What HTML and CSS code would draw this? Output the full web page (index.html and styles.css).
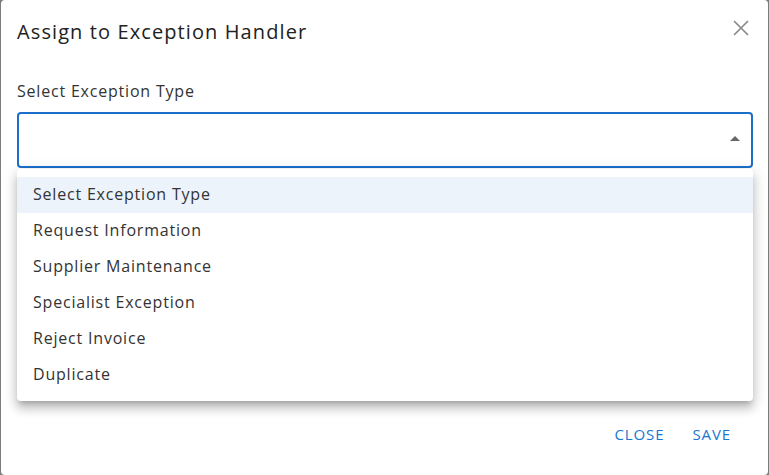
FILE: index.html
```html
<!DOCTYPE html>
<html lang="en">
<head>
<meta charset="utf-8">
<title>Assign to Exception Handler</title>
<link rel="stylesheet" href="styles.css">
</head>
<body>
<div class="dialog">
  <div class="header">
    <h2 class="title">Assign to Exception Handler</h2>
    <button class="close-btn" aria-label="Close">
      <svg width="16" height="16" viewBox="0 0 16 16"><path d="M1 1L15 15M15 1L1 15" stroke="#8a8a8a" stroke-width="1.7" fill="none"/></svg>
    </button>
  </div>
  <div class="content">
    <div class="label">Select Exception Type</div>
    <div class="field">
      <div class="select"><span class="arrow"></span></div>
      <ul class="menu">
        <li class="item active">Select Exception Type</li>
        <li class="item">Request Information</li>
        <li class="item">Supplier Maintenance</li>
        <li class="item">Specialist Exception</li>
        <li class="item">Reject Invoice</li>
        <li class="item">Duplicate</li>
      </ul>
    </div>
  </div>
  <div class="actions">
    <button class="btn">Close</button>
    <button class="btn">Save</button>
  </div>
</div>
</body>
</html>
```
FILE: styles.css
```css
html, body {
  margin: 0;
  padding: 0;
}
body {
  width: 769px;
  height: 475px;
  overflow: hidden;
  background: #7c7c7c;
  font-family: "Open Sans", "Noto Sans", sans-serif;
}
.dialog {
  margin-left: 1px;
  width: 767px;
  height: 475px;
  background: #fff;
  border-radius: 4px;
  display: flex;
  flex-direction: column;
  box-sizing: border-box;
}
.header {
  display: flex;
  justify-content: space-between;
  align-items: flex-start;
  padding: 16px 19px 16px 16px;
}
.title {
  margin: 0;
  font-size: 20px;
  line-height: 32px;
  font-weight: 500;
  letter-spacing: 1.1px;
  color: #222;
}
.close-btn {
  border: 0;
  background: none;
  padding: 0;
  margin-top: 4px;
  width: 16px;
  height: 16px;
  display: flex;
}
.content {
  padding: 15px 15px 0 16px;
}
.label {
  font-size: 16px;
  line-height: 24px;
  letter-spacing: 0.8px;
  color: #333;
  margin-bottom: 9px;
}
.field {
  position: relative;
}
.select {
  height: 56px;
  border: 2px solid #1a6fcb;
  border-radius: 4px;
  box-sizing: border-box;
  display: flex;
  align-items: center;
  justify-content: flex-end;
  padding-right: 11px;
}
.arrow {
  width: 0;
  height: 0;
  border-left: 5px solid transparent;
  border-right: 5px solid transparent;
  border-bottom: 5px solid #666;
  margin-top: -3px;
}
.menu {
  position: absolute;
  top: calc(100% + 1px);
  left: 0;
  right: 0;
  margin: 0;
  padding: 8px 0;
  list-style: none;
  background: #fff;
  border-radius: 4px;
  box-shadow: 0 5px 5px -3px rgba(0,0,0,0.2), 0 8px 10px 1px rgba(0,0,0,0.14), 0 3px 14px 2px rgba(0,0,0,0.12);
  z-index: 2;
}
.item {
  height: 36px;
  line-height: 35px;
  padding: 0 16px;
  font-size: 16px;
  letter-spacing: 0.8px;
  color: #333;
}
.item.active {
  background: #ecf3fb;
}
.actions {
  margin-top: auto;
  display: flex;
  justify-content: flex-end;
  gap: 12px;
  padding: 0 29px 23px 0;
}
.btn {
  border: 0;
  background: none;
  font-family: "Open Sans", sans-serif;
  text-transform: uppercase;
  font-size: 15px;
  font-weight: 500;
  letter-spacing: 0.9px;
  color: #1976d2;
  padding: 6px 8px;
  line-height: 24px;
}
```
